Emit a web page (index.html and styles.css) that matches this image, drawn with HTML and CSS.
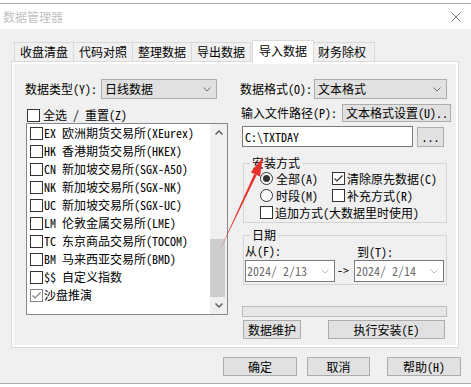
FILE: index.html
```html
<!DOCTYPE html>
<html lang="zh-CN">
<head>
  <meta charset="UTF-8">
  <meta name="viewport" content="width=device-width, initial-scale=1.0">
  <title>数据管理器</title>
  <link rel="stylesheet" href="styles.css">
</head>
<body>

<div class="window">
  <div class="titlebar">
    <span class="title">数据管理器</span>
    <svg class="close" width="10" height="10" viewBox="0 0 10 10"><path d="M0.5 0.5 L9.5 9.5 M9.5 0.5 L0.5 9.5" stroke="#7a7a7a" stroke-width="1"/></svg>
  </div>

  <div class="client">
    <div class="tabs">
      <div class="tab">收盘清盘</div>
      <div class="tab">代码对照</div>
      <div class="tab">整理数据</div>
      <div class="tab">导出数据</div>
      <div class="tab active">导入数据</div>
      <div class="tab last">财务除权</div>
    </div>

    <div class="panel">
      <!-- 左边: 数据类型 + 市场列表 -->
      <div class="col-left">
        <div class="field-row">
          <span class="label">数据类型(Y):</span>
          <div class="select sel-type">日线数据<svg class="chev" width="8" height="5" viewBox="0 0 8 5"><path d="M0.5 0.5 L4 4 L7.5 0.5" fill="none" stroke="#6d6d6d"/></svg></div>
        </div>
        <div class="check-all"><span class="box"></span>全选 / 重置(Z)</div>

        <div class="listbox">
          <div class="items">
            <div class="item"><span class="box"></span>EX 欧洲期货交易所(XEurex)</div>
            <div class="item"><span class="box"></span>HK 香港期货交易所(HKEX)</div>
            <div class="item"><span class="box"></span>CN 新加坡交易所(SGX-A50)</div>
            <div class="item"><span class="box"></span>NK 新加坡交易所(SGX-NK)</div>
            <div class="item"><span class="box"></span>UC 新加坡交易所(SGX-UC)</div>
            <div class="item"><span class="box"></span>LM 伦敦金属交易所(LME)</div>
            <div class="item"><span class="box"></span>TC 东京商品交易所(TOCOM)</div>
            <div class="item"><span class="box"></span>BM 马来西亚交易所(BMD)</div>
            <div class="item"><span class="box"></span>$$ 自定义指数</div>
            <div class="item"><span class="box checked light"><svg width="11" height="11" viewBox="0 0 11 11"><path d="M1.5 5.5 L4 8 L9.5 2.5" fill="none" stroke="#808080" stroke-width="1.2"/></svg></span>沙盘推演</div>
          </div>
          <div class="scrollbar">
            <div class="sb-btn"><svg width="8" height="5" viewBox="0 0 8 5"><path d="M0.5 4.5 L4 1 L7.5 4.5" fill="none" stroke="#606060" stroke-width="1.5"/></svg></div>
            <div class="sb-track"><div class="sb-thumb"></div></div>
            <div class="sb-btn"><svg width="8" height="5" viewBox="0 0 8 5"><path d="M0.5 0.5 L4 4 L7.5 0.5" fill="none" stroke="#606060" stroke-width="1.5"/></svg></div>
          </div>
        </div>
      </div>

      <!-- 右边: 导入设置 -->
      <div class="col-right">
        <div class="field-row">
          <span class="label">数据格式(O):</span>
          <div class="select sel-format">文本格式<svg class="chev" width="8" height="5" viewBox="0 0 8 5"><path d="M0.5 0.5 L4 4 L7.5 0.5" fill="none" stroke="#6d6d6d"/></svg></div>
        </div>
        <div class="field-row path-row">
          <span class="label">输入文件路径(P):</span>
          <div class="btn btn-setting">文本格式设置(U)..</div>
        </div>
        <div class="field-row input-row">
          <div class="textbox">C:\TXTDAY</div>
          <div class="btn btn-browse">...</div>
        </div>

        <fieldset class="group group-mode">
          <legend>安装方式</legend>
          <div class="mode-grid">
            <div class="opt"><span class="radio on"></span>全部(A)</div>
            <div class="opt opt-check"><span class="box checked"><svg width="11" height="11" viewBox="0 0 11 11"><path d="M1.5 5.5 L4 8 L9.5 2.5" fill="none" stroke="#333" stroke-width="1.2"/></svg></span>清除原先数据(C)</div>
            <div class="opt"><span class="radio"></span>时段(M)</div>
            <div class="opt opt-check"><span class="box"></span>补充方式(R)</div>
            <div class="opt wide"><span class="box"></span>追加方式(大数据里时使用)</div>
          </div>
        </fieldset>

        <fieldset class="group group-date">
          <legend>日期</legend>
          <div class="date-row">
            <div class="date-col">
              <span class="date-label">从(F):</span>
              <div class="datepick">2024/ 2/13<svg class="chev" width="8" height="5" viewBox="0 0 8 5"><path d="M0.5 0.5 L4 4 L7.5 0.5" fill="none" stroke="#b5b5b5"/></svg></div>
            </div>
            <span class="to-arrow">-&gt;</span>
            <div class="date-col">
              <span class="date-label to">到(T):</span>
              <div class="datepick">2024/ 2/14<svg class="chev" width="8" height="5" viewBox="0 0 8 5"><path d="M0.5 0.5 L4 4 L7.5 0.5" fill="none" stroke="#b5b5b5"/></svg></div>
            </div>
          </div>
        </fieldset>

        <div class="progress"></div>

        <div class="action-row">
          <div class="btn btn-maint">数据维护</div>
          <div class="btn btn-run">执行安装(E)</div>
        </div>
      </div>
    </div>

    <div class="footer">
      <div class="btn btn-ok">确定</div>
      <div class="btn btn-cancel">取消</div>
      <div class="btn btn-help">帮助(H)</div>
    </div>
  </div>
</div>

<!-- 标注箭头 -->
<svg class="mark-arrow" width="471" height="387" viewBox="0 0 471 387">
  <polygon points="220,250 254.2,173.9 256.7,175" fill="#e8312a"/>
  <polygon points="263,157 250.8,172.3 260,176.4" fill="#e8312a"/>
</svg>

</body>
</html>
```

FILE: styles.css
```css
* {
  box-sizing: border-box;
}
body {
  margin: 0;
  background: #fff;
  font-family: "Noto Sans Mono CJK SC", "Noto Sans CJK SC", sans-serif;
  font-size: 12px;
  line-height: 16px;
  color: #000;
}
.window {
  margin-top: 3px;
  height: 381px;
  border-top: 1px solid #a9a9a9;
  border-bottom: 1px solid #a9a9a9;
  background: #f0f0f0;
}
.titlebar {
  height: 25px;
  background: #fff;
  display: flex;
  align-items: center;
  justify-content: space-between;
  padding: 0 10px 0 3px;
}
.title {
  color: #c2c2c2;
}
.close {
  display: block;
  margin-top: 1px;
}
.client {
  padding: 11px 12px 0 11px;
}

/* 标签页 */
.tabs {
  display: flex;
  align-items: flex-end;
  height: 21px;
  padding-left: 3px;
  position: relative;
  z-index: 1;
  white-space: nowrap;
}
.tab {
  height: 19px;
  line-height: 18px;
  padding: 0 5px;
  border: 1px solid #d9d9d9;
  border-bottom: none;
  background: #f0f0f0;
  margin-left: -1px;
  flex: none;
}
.tab:first-child {
  margin-left: 0;
}
.tab.active {
  height: 23px;
  margin: 0 -1px -2px 1px;
  padding: 0 6px;
  background: #fff;
  line-height: 20px;
  position: relative;
}
.tab.last {
  padding: 0 8px 0 5px;
}
.panel {
  height: 287px;
  border: 1px solid #d9d9d9;
  box-shadow: inset 0 0 0 2px #fff;
  padding: 17px 7px 0 13px;
  display: grid;
  grid-template-columns: 202px 211px;
  column-gap: 13px;
}

/* 通用控件 */
.field-row {
  display: flex;
  align-items: center;
  height: 20px;
}
.select {
  height: 20px;
  border: 1px solid #adadad;
  background: #e1e1e1;
  display: flex;
  align-items: center;
  justify-content: space-between;
  padding: 0 5px 0 3px;
}
.sel-type {
  width: 116px;
  margin-left: 4px;
}
.sel-format {
  width: 133px;
  margin-left: 2px;
}
.btn {
  height: 19px;
  border: 1px solid #adadad;
  background: #e1e1e1;
  display: flex;
  align-items: center;
  justify-content: center;
}
.box {
  width: 13px;
  height: 13px;
  border: 1px solid #333;
  background: #fff;
  display: inline-flex;
  align-items: center;
  justify-content: center;
  flex: none;
}
.box.light {
  border-color: #858585;
}
.radio {
  width: 13px;
  height: 13px;
  border: 1px solid #333;
  border-radius: 50%;
  background: #fff;
  display: inline-flex;
  align-items: center;
  justify-content: center;
  flex: none;
}
.radio.on::after {
  content: "";
  width: 7px;
  height: 7px;
  border-radius: 50%;
  background: #333;
}

/* 左栏 */
.check-all {
  display: flex;
  align-items: center;
  height: 16px;
  margin-top: 8px;
  padding-left: 2px;
}
.check-all .box {
  margin-right: 3px;
}
.listbox {
  width: 202px;
  height: 192px;
  margin-left: 1px;
  border: 1px solid #828790;
  background: #fff;
  display: flex;
}
.items {
  flex: 1;
}
.item {
  height: 18px;
  display: flex;
  align-items: center;
  padding-left: 3px;
  white-space: nowrap;
}
.item .box {
  margin-right: 1px;
}
.scrollbar {
  width: 17px;
  background: #f0f0f0;
  display: flex;
  flex-direction: column;
}
.sb-btn {
  height: 17px;
  display: flex;
  align-items: center;
  justify-content: center;
}
.sb-btn svg {
  display: block;
}
.sb-track {
  flex: 1;
  display: flex;
  flex-direction: column;
}
.sb-thumb {
  margin: auto 2px 0 0;
  height: 58px;
  background: #cdcdcd;
}

/* 右栏 */
.path-row {
  margin-top: 5px;
  height: 18px;
  justify-content: space-between;
  padding-left: 1px;
}
.btn-setting {
  width: 109px;
  height: 18px;
  justify-content: flex-start;
  padding-left: 3px;
  white-space: nowrap;
}
.input-row {
  margin-top: 4px;
  height: 21px;
  padding-left: 2px;
}
.textbox {
  width: 171px;
  height: 21px;
  border: 1px solid #7a7a7a;
  background: #fff;
  padding-left: 2px;
  line-height: 19px;
}
.btn-browse {
  width: 27px;
  height: 20px;
  margin-left: 4px;
}
.group {
  margin: 0 0 0 3px;
  width: 204px;
  padding: 0;
  border: 1px solid #d5d5d5;
}
.group legend {
  margin-left: 6px;
  padding: 0 2px;
  line-height: 16px;
}
.group-mode {
  margin-top: 8px;
}
.mode-grid {
  display: grid;
  grid-template-columns: 72px auto;
  padding: 0 0 1px 16px;
  margin-top: -1px;
}
.opt {
  height: 17px;
  display: flex;
  align-items: center;
  white-space: nowrap;
}
.opt .radio {
  margin-right: 3px;
}
.opt .box {
  margin-right: 2px;
}
.opt.wide {
  grid-column: 1 / 3;
}
.group-date {
  margin-top: 4px;
}
.date-row {
  display: flex;
  align-items: flex-end;
  padding: 0 0 2px 1px;
}
.date-col {
  display: flex;
  flex-direction: column;
}
.date-label {
  height: 17px;
  line-height: 16px;
}
.date-label.to {
  padding-left: 3px;
  line-height: 18px;
}
.datepick {
  width: 90px;
  height: 22px;
  border: 1px solid #7a7a7a;
  background: #fff;
  color: #6d6d6d;
  display: flex;
  align-items: center;
  justify-content: space-between;
  padding: 0 5px 0 1px;
}
.to-arrow {
  width: 19px;
  height: 22px;
  line-height: 20px;
  padding-left: 2px;
}
.progress {
  margin: 21px 0 0 2px;
  width: 205px;
  height: 11px;
  border: 1px solid #bcbcbc;
  background: #e6e6e6;
}
.action-row {
  display: flex;
  margin-top: 3px;
  padding-left: 3px;
}
.btn-maint {
  width: 58px;
}
.btn-run {
  width: 117px;
  margin-left: 27px;
}

/* 底部按钮 */
.footer {
  display: flex;
  justify-content: flex-end;
  margin: 9px -2px 0 0;
}
.btn-ok {
  width: 74px;
}
.btn-cancel {
  width: 63px;
  margin-left: 10px;
}
.btn-help {
  width: 74px;
  margin-left: 17px;
}

/* 标注 */
.mark-arrow {
  position: absolute;
  left: 0;
  top: 0;
  pointer-events: none;
}
```
